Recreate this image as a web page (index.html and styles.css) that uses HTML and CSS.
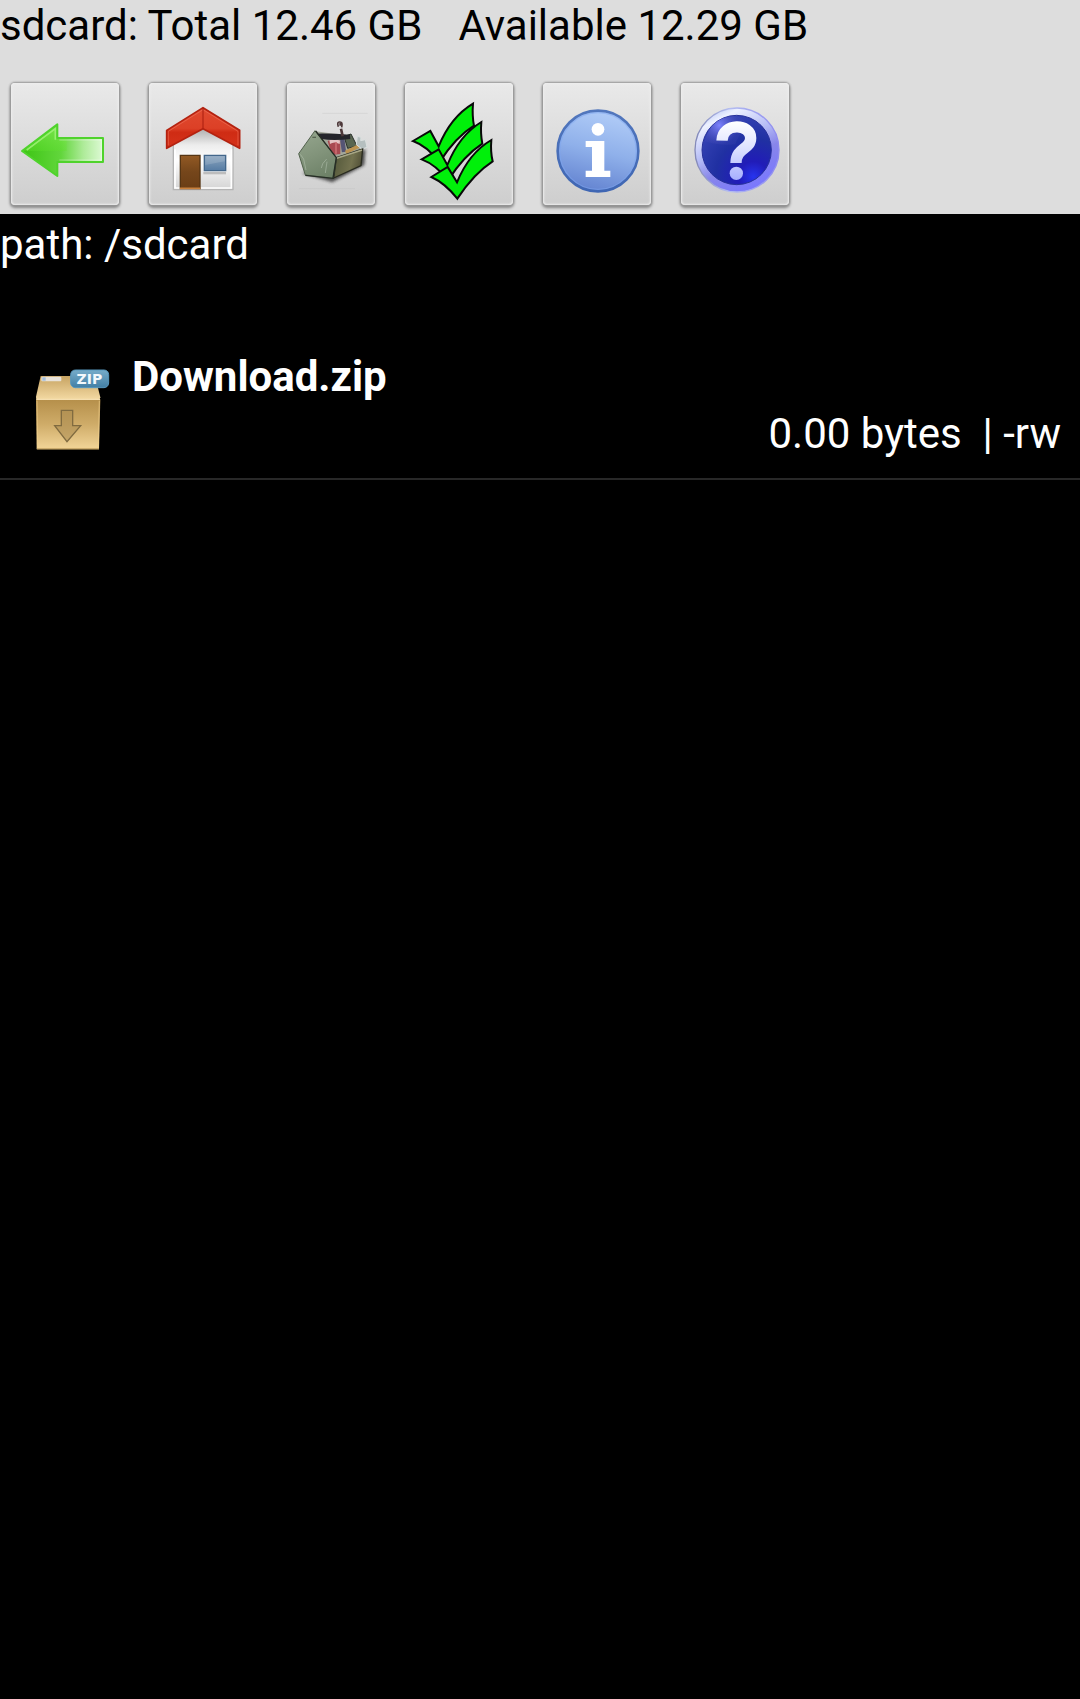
FILE: index.html
```html
<!DOCTYPE html>
<html lang="en">
<head>
<meta charset="utf-8">
<meta name="viewport" content="width=device-width, initial-scale=1">
<title>File Manager</title>
<link rel="stylesheet" href="styles.css">
</head>
<body>
<header class="header">
  <p class="storage"><span class="storage-total">sdcard: Total 12.46 GB</span><span>Available 12.29 GB</span></p>
  <nav class="toolbar" aria-label="Tools">
    <button class="tool" type="button" aria-label="Back">
      <svg class="tool-icon" viewBox="33 39 324 366" aria-hidden="true">
        <defs>
          <linearGradient id="arrowFill" x1="64" y1="0" x2="312" y2="0" gradientUnits="userSpaceOnUse">
            <stop offset="0" stop-color="#3cc413"/><stop offset=".48" stop-color="#62d63c"/><stop offset=".75" stop-color="#aeeb99"/><stop offset="1" stop-color="#e0fad8"/>
          </linearGradient>
          <linearGradient id="arrowLight" x1="0" y1="165" x2="0" y2="243" gradientUnits="userSpaceOnUse">
            <stop offset="0" stop-color="#8cf05a" stop-opacity=".6"/><stop offset="1" stop-color="#5fe02c" stop-opacity=".35"/>
          </linearGradient>
        </defs>
        <path d="M66 243 172 163V204H309V276H172V318Z" fill="url(#arrowFill)"/>
        <path d="M66 243 172 163V204H200V243Z" fill="url(#arrowLight)"/>
        <path d="M80 240 166 176V209" fill="none" stroke="#a4f27d" stroke-width="5" opacity=".8"/>
        <path d="M178 210H304V270H178" fill="none" stroke="#fff" stroke-width="3" opacity=".35"/>
        <path d="M66 243 172 163V204H309V276H172V318Z" fill="none" stroke="#4fd32c" stroke-width="6" stroke-linejoin="round"/>
      </svg>
    </button>
    <button class="tool" type="button" aria-label="Home">
      <svg class="tool-icon" viewBox="27 39 324 366" aria-hidden="true">
        <defs>
          <linearGradient id="wall" x1="0" y1="180" x2="0" y2="358" gradientUnits="userSpaceOnUse">
            <stop offset="0" stop-color="#b4b4b4"/><stop offset=".25" stop-color="#ececec"/><stop offset=".5" stop-color="#fff"/><stop offset="1" stop-color="#d4d4d4"/>
          </linearGradient>
          <linearGradient id="roof" x1="0" y1="115" x2="0" y2="235" gradientUnits="userSpaceOnUse">
            <stop offset="0" stop-color="#e04a30"/><stop offset=".5" stop-color="#dc4026"/><stop offset=".6" stop-color="#cf2c14"/><stop offset="1" stop-color="#d5321a"/>
          </linearGradient>
          <linearGradient id="door" x1="0" y1="255" x2="0" y2="356" gradientUnits="userSpaceOnUse">
            <stop offset="0" stop-color="#935a24"/><stop offset=".5" stop-color="#75461b"/><stop offset="1" stop-color="#6a3d15"/>
          </linearGradient>
          <linearGradient id="pane" x1="0" y1="255" x2="0" y2="303" gradientUnits="userSpaceOnUse">
            <stop offset="0" stop-color="#8da6bf"/><stop offset="1" stop-color="#557ba3"/>
          </linearGradient>
        </defs>
        <path d="M100 359V220L189 160 279 220V359Z" fill="url(#wall)" stroke="#b4b4b4" stroke-width="4"/>
        <path d="M105 238V354H274V238" fill="none" stroke="#fff" stroke-width="5"/>
        <path d="M80 181 189 113 299 181V235L189 176 80 235Z" fill="url(#roof)" stroke="#b32210" stroke-width="5" stroke-linejoin="round"/>
        <path d="M85 226V184L189 119 294 184V226" fill="none" stroke="#f27863" stroke-width="2" opacity=".8"/>
        <path d="M189 114V175" stroke="#a81d0e" stroke-width="3"/>
        <path d="M121 256H180V356H121Z" fill="url(#door)" stroke="#553514" stroke-width="4"/>
        <path d="M120 355H181" stroke="#c8803c" stroke-width="5"/>
        <path d="M190 306H258V313H190Z" fill="#bdbdbd"/>
        <path d="M193 256H257V302H193Z" fill="url(#pane)" stroke="#43678b" stroke-width="4"/>
        <path d="M196 259H254V274L196 285Z" fill="#fff" opacity=".14"/>
      </svg>
    </button>
    <button class="tool tool-narrow" type="button" aria-label="Toolbox">
      <svg class="tool-icon" viewBox="36 39 264 366" aria-hidden="true">
        <defs>
          <linearGradient id="boxEnd" x1="90" y1="190" x2="150" y2="325" gradientUnits="userSpaceOnUse">
            <stop offset="0" stop-color="#93a48c"/><stop offset=".5" stop-color="#81937a"/><stop offset="1" stop-color="#6c8066"/>
          </linearGradient>
          <linearGradient id="boxSide" x1="180" y1="270" x2="260" y2="290" gradientUnits="userSpaceOnUse">
            <stop offset="0" stop-color="#565a3c"/><stop offset=".6" stop-color="#73724f"/><stop offset="1" stop-color="#504e36"/>
          </linearGradient>
          <filter id="softShade"><feGaussianBlur stdDeviation="5"/></filter>
        </defs>
        <path d="M142 130H278M72 356H240" stroke="#bcbcbc" stroke-width="2" opacity=".5"/>
        <path d="M82 310 172 337 268 286 272 238 200 260Z" fill="#222" opacity=".75" filter="url(#softShade)"/>
        <path d="M122 184 226 198 246 226 262 242 184 266Z" fill="#a3a79a"/>
        <path d="M207 199 228 192 246 228 218 235Z" fill="#586550" stroke="#29302a" stroke-width="3"/>
        <path d="M158 213Q177 203 196 213V252L170 255Z" fill="#a94a50"/>
        <path d="M163 211Q178 204 195 212L194 222Q177 213 165 222Z" fill="#e5c5c4"/>
        <path d="M183 216V251" stroke="#c96d71" stroke-width="5"/>
        <path d="M201 202 207 246" stroke="#555575" stroke-width="13"/>
        <path d="M212 247 260 224" stroke="#bc9350" stroke-width="11"/>
        <path d="M244 224 247 199 258 202 257 212 271 209 276 232 261 237Z" fill="#b5bfbf" stroke="#dae0df" stroke-width="3"/>
        <path d="M124 191Q170 190 225 194L226 207Q174 213 140 207Z" fill="#24252b"/>
        <path d="M203 199 198 176M197 167V159" fill="none" stroke="#4d383a" stroke-width="8"/>
        <path d="M190 170Q185 155 194 156Q204 155 200 172" fill="none" stroke="#4d383a" stroke-width="5"/>
        <path d="M184 263 263 237 258 287 176 324Z" fill="url(#boxSide)" stroke="#292b20" stroke-width="4"/>
        <path d="M185 265 261 240" stroke="#a8a787" stroke-width="5"/>
        <path d="M120 182 184 263 174 325 91 315 71 251Z" fill="url(#boxEnd)" stroke="#51614c" stroke-width="3"/>
        <path d="M122 183 184 263 174 325 91 316" fill="none" stroke="#252c24" stroke-width="4"/>
        <path d="M76 253 86 267 93 300M155 267Q139 282 139 294M156 275 151 309" fill="none" stroke="#bac7b5" stroke-width="3" opacity=".5"/>
        <path d="M112 202H123" stroke="#576350" stroke-width="4"/>
      </svg>
    </button>
    <button class="tool" type="button" aria-label="Select all">
      <svg class="tool-icon" viewBox="30 39 324 366" aria-hidden="true">
        <g fill="#00f00a" stroke="#090909" stroke-width="6" stroke-linejoin="miter">
          <path d="M54 213 106 183 131 229Q167 141 234 101Q231 138 237 167Q182 201 133 277Q98 229 54 213Z"/>
          <path d="M80 268 131 238 157 285Q193 196 259 156Q256 191 262 221Q207 257 159 331Q123 284 80 268Z"/>
          <path d="M109 321 158 291 186 337Q222 249 289 210Q286 245 293 274Q237 310 187 386Q151 340 109 321Z"/>
        </g>
      </svg>
    </button>
    <button class="tool" type="button" aria-label="Information">
      <svg class="tool-icon" viewBox="39 39 324 366" aria-hidden="true">
        <defs>
          <linearGradient id="infoFill" x1="230" y1="120" x2="170" y2="365" gradientUnits="userSpaceOnUse">
            <stop offset="0" stop-color="#b2cdf8"/><stop offset=".5" stop-color="#8fb0ea"/><stop offset="1" stop-color="#6282d0"/>
          </linearGradient>
          <linearGradient id="infoRim" x1="0" y1="118" x2="0" y2="368" gradientUnits="userSpaceOnUse">
            <stop offset="0" stop-color="#5277bd"/><stop offset="1" stop-color="#3f66b3"/>
          </linearGradient>
        </defs>
        <circle cx="204" cy="243" r="121" fill="url(#infoFill)" stroke="url(#infoRim)" stroke-width="8"/>
        <circle cx="204" cy="243" r="115" fill="none" stroke="#7da5ef" stroke-width="4" opacity=".5"/>
        <circle cx="204" cy="178" r="19" fill="#fff"/>
        <path d="M167 213H223V302H241V321H167V302H186V231H167Z" fill="#fff"/>
      </svg>
    </button>
    <button class="tool" type="button" aria-label="Help">
      <svg class="tool-icon" viewBox="33 39 324 366" aria-hidden="true">
        <defs>
          <linearGradient id="helpRim" x1="130" y1="120" x2="255" y2="360" gradientUnits="userSpaceOnUse">
            <stop offset="0" stop-color="#bfccf7"/><stop offset=".12" stop-color="#edf1ff"/><stop offset=".42" stop-color="#b6bdf6"/><stop offset=".65" stop-color="#8886ea"/><stop offset="1" stop-color="#7977ff"/>
          </linearGradient>
          <linearGradient id="helpEdge" x1="75" y1="0" x2="328" y2="0" gradientUnits="userSpaceOnUse">
            <stop offset="0" stop-color="#8389b8"/><stop offset=".4" stop-color="#b4bdf0"/><stop offset="1" stop-color="#8d8af0"/>
          </linearGradient>
          <radialGradient id="helpFill" cx="250" cy="320" r="190" gradientUnits="userSpaceOnUse">
            <stop offset="0" stop-color="#2734ee"/><stop offset=".24" stop-color="#211cb8"/><stop offset=".6" stop-color="#2030a2"/><stop offset="1" stop-color="#3442b4"/>
          </radialGradient>
          <radialGradient id="helpGlow" cx="148" cy="166" r="58" gradientUnits="userSpaceOnUse">
            <stop offset="0" stop-color="#7d83ff"/><stop offset="1" stop-color="#5355bd" stop-opacity=".15"/>
          </radialGradient>
          <linearGradient id="markFill" x1="0" y1="155" x2="0" y2="330" gradientUnits="userSpaceOnUse">
            <stop offset="0" stop-color="#fff"/><stop offset=".5" stop-color="#dadfff"/><stop offset="1" stop-color="#a7afff"/>
          </linearGradient>
        </defs>
        <circle cx="201" cy="240" r="126" fill="url(#helpRim)" stroke="url(#helpEdge)" stroke-width="4"/>
        <circle cx="200" cy="240" r="104" fill="url(#helpFill)" stroke="#27319a" stroke-width="3"/>
        <path d="M105 213Q121 144 190 138Q229 143 229 168Q202 200 196 223Q144 228 105 213Z" fill="url(#helpGlow)"/>
        <path d="M156 212C158 157 242 160 242 204C242 240 198 232 198 279" fill="none" stroke="url(#markFill)" stroke-width="34"/>
        <circle cx="199" cy="310" r="20" fill="url(#markFill)"/>
      </svg>
    </button>
  </nav>
</header>
<main class="browser">
  <p class="path">path: /sdcard</p>
  <ul class="files">
    <li>
      <a class="file" href="#download">
        <svg class="file-icon" viewBox="30 30 270 297" aria-hidden="true">
          <defs>
            <linearGradient id="boxFront" x1="0" y1="148" x2="0" y2="298" gradientUnits="userSpaceOnUse">
              <stop offset="0" stop-color="#b58f4a"/><stop offset=".5" stop-color="#cfac69"/><stop offset="1" stop-color="#f2d598"/>
            </linearGradient>
            <linearGradient id="boxTop" x1="0" y1="78" x2="0" y2="148" gradientUnits="userSpaceOnUse">
              <stop offset="0" stop-color="#c7a362"/><stop offset="1" stop-color="#f3d9a2"/>
            </linearGradient>
            <linearGradient id="zipBadge" x1="0" y1="59" x2="0" y2="113" gradientUnits="userSpaceOnUse">
              <stop offset="0" stop-color="#78adca"/><stop offset="1" stop-color="#427fa5"/>
            </linearGradient>
          </defs>
          <path d="M62 78H225L241 142 238 150H49L48 140Z" fill="url(#boxTop)"/>
          <path d="M48 148H241L237 298H50Z" fill="url(#boxFront)"/>
          <path d="M49 148H240" stroke="#f5dfb1" stroke-width="4"/>
          <path d="M51 152 53 294H235L238 152" fill="none" stroke="#f2d18c" stroke-width="3" opacity=".65"/>
          <path d="M51 297H237" stroke="#a28347" stroke-width="3"/>
          <rect x="64" y="80" width="60" height="14" rx="3" fill="#e8e2da"/>
          <rect x="67" y="82" width="10" height="10" fill="#a1bddb"/>
          <path d="M124 181H158V227H182L141 275 104 227H124Z" fill="#a98b51" fill-opacity=".55" stroke="#806b40" stroke-width="4"/>
          <rect x="152" y="60" width="114" height="53" rx="14" fill="url(#zipBadge)" stroke="#5797bd" stroke-width="3"/>
          <text class="zip-label" x="208" y="101" text-anchor="middle">ZIP</text>
        </svg>
        <span class="file-text">
          <span class="file-name">Download.zip</span>
          <span class="file-meta">0.00 bytes  | -rw</span>
        </span>
      </a>
    </li>
  </ul>
</main>
</body>
</html>
```
FILE: styles.css
```css
* {
  box-sizing: border-box;
}

body {
  margin: 0;
  min-height: 100vh;
  background: #000;
  color: #fff;
  font-family: Roboto, "Liberation Sans", sans-serif;
  font-size: 42px;
  line-height: 50px;
}

.header {
  padding: 1px 0 9px;
  background: #ddd;
  color: #000;
}

.storage,
.path {
  margin: 0;
}

.storage {
  display: flex;
  flex-wrap: wrap;
  column-gap: 36px;
}

.toolbar {
  display: flex;
  flex-wrap: wrap;
  gap: 30px;
  padding: 32px 11px 0;
}

.tool {
  width: 108px;
  height: 122px;
  padding: 0;
  border: 0;
  border-radius: 4px;
  background: linear-gradient(#e9e9e9, #cecece);
  box-shadow: 0 0 2px 1px #999, 0 2px 3px 1px #888, inset 0 0 2px 1px #eee;
  cursor: pointer;
}

.tool-narrow {
  width: 88px;
}

.tool-icon {
  display: block;
  width: 100%;
  height: 100%;
}

.path {
  padding-top: 6px;
}

.files {
  margin: 82px 0 0;
  padding: 0;
  list-style: none;
}

.file {
  display: flex;
  align-items: flex-end;
  gap: 12px;
  padding: 0 19px 19px 30px;
  border-bottom: 2px solid #282828;
  color: inherit;
  text-decoration: none;
}

.file-icon {
  flex: none;
  width: 90px;
  height: 99px;
}

.file-text {
  display: flex;
  flex: 1;
  flex-direction: column;
  gap: 7px;
}

.file-name {
  font-weight: 700;
}

.file-meta {
  text-align: right;
  white-space: pre-wrap;
}

.zip-label {
  fill: #f2f8fc;
  font-family: "DejaVu Sans", sans-serif;
  font-size: 42px;
  font-weight: 700;
}
```
